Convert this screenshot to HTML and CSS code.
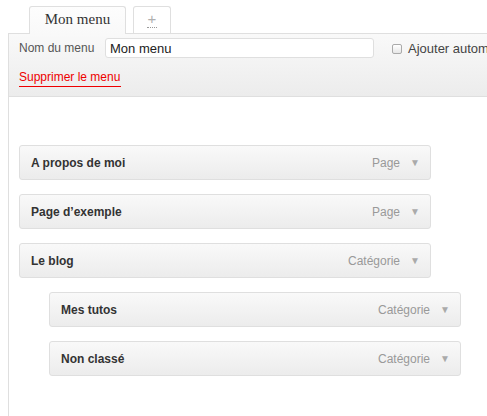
FILE: index.html
```html
<!DOCTYPE html>
<html lang="fr">
<head>
<meta charset="utf-8">
<title>Menus</title>
<link rel="stylesheet" href="styles.css">
</head>
<body>
<div class="wrap">
  <div class="tabs">
    <div class="tab tab-active">Mon menu</div>
    <div class="tab tab-add"><span class="plus">+</span></div>
  </div>
  <div class="panel">
    <div class="panel-head">
      <div class="row">
        <label class="label" for="menu-name">Nom du menu</label>
        <input id="menu-name" class="name-input" type="text" value="Mon menu">
        <label class="auto"><span class="check"></span>Ajouter automatiquement les pages</label>
      </div>
      <div class="row-link">
        <a class="delete" href="#">Supprimer le menu</a>
      </div>
    </div>
    <div class="panel-body">
      <div class="item"><span class="item-title">A propos de moi</span><span class="item-type">Page</span><span class="arrow">▼</span></div>
      <div class="item"><span class="item-title">Page d’exemple</span><span class="item-type">Page</span><span class="arrow">▼</span></div>
      <div class="item"><span class="item-title">Le blog</span><span class="item-type">Catégorie</span><span class="arrow">▼</span></div>
      <div class="sub">
        <div class="item"><span class="item-title">Mes tutos</span><span class="item-type">Catégorie</span><span class="arrow">▼</span></div>
        <div class="item"><span class="item-title">Non classé</span><span class="item-type">Catégorie</span><span class="arrow">▼</span></div>
      </div>
    </div>
  </div>
</div>
</body>
</html>
```
FILE: styles.css
```css
html, body {
  margin: 0;
  padding: 0;
  background: #fff;
  overflow: hidden;
}
body {
  width: 487px;
  height: 416px;
  font-family: "Liberation Sans", Arial, sans-serif;
  font-size: 12px;
  color: #333;
}
.wrap {
  box-sizing: border-box;
  width: 487px;
  height: 416px;
  overflow: hidden;
  padding: 6px 0 0 8px;
}
.tabs {
  display: flex;
  gap: 7px;
  padding-left: 21px;
  position: relative;
  z-index: 2;
  margin-bottom: -1px;
}
.tab {
  box-sizing: border-box;
  height: 28px;
  border: 1px solid #dfdfdf;
  border-bottom: none;
  border-radius: 3px 3px 0 0;
}
.tab-active {
  width: 97px;
  background: linear-gradient(#fdfdfd, #f9f9f9);
  font-family: "Liberation Serif", Georgia, serif;
  font-size: 15px;
  color: #333;
  text-align: center;
  line-height: 25px;
}
.tab-add {
  width: 38px;
  height: 27px;
  background: #fff;
  display: flex;
  justify-content: center;
  padding-top: 4px;
}
.plus {
  font-size: 15px;
  line-height: 15px;
  height: 16px;
  color: #b0b0b0;
  border-bottom: 1px dotted #999;
  padding: 0 1px;
}
.panel {
  width: 600px;
  border-left: 1px solid #dfdfdf;
  border-top: 1px solid #dfdfdf;
}
.panel-head {
  height: 63px;
  box-sizing: border-box;
  padding: 4px 0 0 10px;
  background: linear-gradient(#f9f9f9, #ececec);
  border-bottom: 1px solid #dfdfdf;
}
.row {
  display: flex;
  align-items: center;
  height: 20px;
  white-space: nowrap;
}
.label {
  flex: none;
  width: 86px;
  color: #555;
}
.name-input {
  flex: none;
  box-sizing: border-box;
  width: 269px;
  height: 20px;
  margin: 0;
  padding: 0 4px;
  border: 1px solid #dfdfdf;
  border-radius: 3px;
  background: #fff;
  font-family: "Liberation Sans", Arial, sans-serif;
  font-size: 13px;
  color: #222;
  outline: none;
}
.auto {
  flex: none;
  display: flex;
  align-items: center;
  margin-left: 18px;
  font-size: 13px;
  color: #444;
}
.check {
  box-sizing: border-box;
  width: 10px;
  height: 10px;
  border: 1px solid #aaa;
  border-radius: 2px;
  background: linear-gradient(#fff, #e6e6e6);
  margin-right: 6px;
  margin-top: 1px;
}
.row-link {
  margin-top: 12px;
}
.delete {
  display: inline-block;
  color: #e00;
  text-decoration: none;
  font-size: 12px;
  line-height: 14px;
  padding: 0 1px 2px 0;
  border-bottom: 1px solid #e00;
}
.panel-body {
  box-sizing: border-box;
  background: #fff;
  padding: 48px 0 0 10px;
  height: 319px;
}
.item {
  box-sizing: border-box;
  width: 412px;
  height: 35px;
  margin-bottom: 14px;
  display: flex;
  align-items: center;
  padding: 0 11px 0 11px;
  border: 1px solid #dfdfdf;
  border-radius: 3px;
  background: linear-gradient(#f9f9f9, #ececec);
}
.item-title {
  flex: 1;
  font-weight: bold;
  font-size: 12px;
  color: #333;
}
.item-type {
  color: #999;
  font-size: 12px;
}
.arrow {
  color: #aaa;
  font-size: 10px;
  margin-left: 10px;
  width: 9px;
}
.sub {
  padding-left: 30px;
}
```
